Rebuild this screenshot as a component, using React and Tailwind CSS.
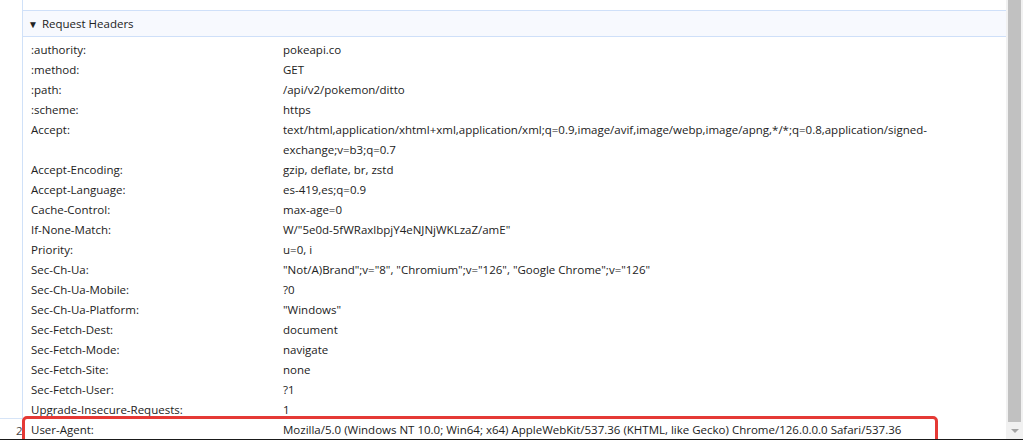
import React from "react";

const rows = [
  [":authority:", "pokeapi.co"],
  [":method:", "GET"],
  [":path:", "/api/v2/pokemon/ditto"],
  [":scheme:", "https"],
  ["Accept:", ["text/html,application/xhtml+xml,application/xml;q=0.9,image/avif,image/webp,image/apng,*/*;q=0.8,application/signed-", "exchange;v=b3;q=0.7"]],
  ["Accept-Encoding:", "gzip, deflate, br, zstd"],
  ["Accept-Language:", "es-419,es;q=0.9"],
  ["Cache-Control:", "max-age=0"],
  ["If-None-Match:", 'W/"5e0d-5fWRaxlbpjY4eNJNjWKLzaZ/amE"'],
  ["Priority:", "u=0, i"],
  ["Sec-Ch-Ua:", '"Not/A)Brand";v="8", "Chromium";v="126", "Google Chrome";v="126"'],
  ["Sec-Ch-Ua-Mobile:", "?0"],
  ["Sec-Ch-Ua-Platform:", '"Windows"'],
  ["Sec-Fetch-Dest:", "document"],
  ["Sec-Fetch-Mode:", "navigate"],
  ["Sec-Fetch-Site:", "none"],
  ["Sec-Fetch-User:", "?1"],
  ["Upgrade-Insecure-Requests:", "1"],
  ["User-Agent:", "Mozilla/5.0 (Windows NT 10.0; Win64; x64) AppleWebKit/537.36 (KHTML, like Gecko) Chrome/126.0.0.0 Safari/537.36"],
];

export default function App() {
  return (
    <div
      className="relative w-[1023px] h-[440px] overflow-hidden bg-white text-[11.5px] text-[#222222] flex"
      style={{ fontFamily: '"Segoe UI", "Open Sans", "Noto Sans", sans-serif' }}
    >
      {/* left strip */}
      <div className="w-[22px] shrink-0 flex flex-col">
        <div className="h-[418px]" />
        <div className="flex-1 border-t border-[#d6e4f7] relative">
          <span className="absolute left-[16px] top-[3px] text-[#444]">2</span>
        </div>
      </div>
      {/* main panel */}
      <div className="flex-1 border-l border-[#d0e1f8] flex flex-col">
        <div className="h-[10px]" />
        <div className="h-[27px] border-y border-[#cfe0f9] bg-[#f7f9fe] flex items-center pl-[5px] gap-[4px]">
          <span className="text-[10px] leading-none">▼</span>
          <span>Request Headers</span>
        </div>
        <div className="pt-[3px] flex flex-col">
          {rows.map(([k, v]) => (
            <div key={k} className="flex leading-[20px]">
              <div className="w-[260px] shrink-0 pl-[8px]">{k}</div>
              <div className="flex-1">
                {Array.isArray(v) ? v.map((l) => <div key={l}>{l}</div>) : v}
              </div>
            </div>
          ))}
        </div>
      </div>
      {/* scrollbar */}
      <div className="w-[17px] shrink-0 bg-[#f1f1f1] flex flex-col items-center">
        <div className="w-[13px] h-[422px] bg-[#c1c1c1]" />
        <div className="flex-1 flex items-center justify-center">
          <div className="w-0 h-0 border-l-[4px] border-r-[4px] border-t-[4px] border-l-transparent border-r-transparent border-t-[#a3a3a3]" />
        </div>
      </div>
      {/* red highlight annotation */}
      <div className="absolute left-[22px] top-[416px] w-[916px] h-[40px] border-[3px] border-[#e53935] rounded-[5px]" />
      {/* bottom edge */}
      <div className="absolute left-0 bottom-0 w-full h-[1px] bg-[#1a1a1a]" />
    </div>
  );
}
